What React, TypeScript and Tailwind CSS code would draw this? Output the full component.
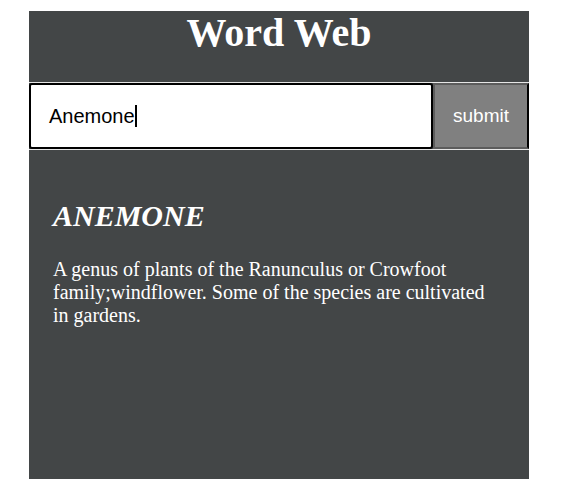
import React from 'react';

const App: React.FC = () => {
  const word = 'Anemone';
  const definition =
    'A genus of plants of the Ranunculus or Crowfoot family;windflower. Some of the species are cultivated in gardens.';

  return (
    <div className="min-h-[479px] bg-white">
      <div className="ml-[29px] pt-[11px] w-[500px]">
        <div className="h-[468px] bg-[#434647] flex flex-col">
          {/* Header */}
          <h1 className="text-center text-white font-bold text-[40px] leading-[44px] font-['Liberation_Serif',serif]">
            Word Web
          </h1>

          {/* Search form */}
          <form
            className="mt-[27px] flex border-y border-[#e6e6e6] h-[68px]"
            onSubmit={(e) => e.preventDefault()}
          >
            <div className="flex-1 flex items-center bg-white border-2 border-black rounded-[3px] pl-[18px] text-[20px] text-black font-['Liberation_Sans',sans-serif]">
              <span>{word}</span>
              <span className="inline-block w-[2px] h-[22px] bg-black"></span>
            </div>
            <button
              type="submit"
              className="w-[96px] bg-[#808080] text-white text-[19px] border-2 border-[#5c5c5c] border-r-black font-['Liberation_Sans',sans-serif]"
            >
              submit
            </button>
          </form>

          {/* Result */}
          <div className="pl-[24px] pt-[49px] font-['Liberation_Serif',serif] text-white">
            <h2 className="text-[30px] leading-[34px] font-bold italic uppercase">{word}</h2>
            <p className="mt-[25px] w-[440px] text-[20px] leading-[23px]">{definition}</p>
          </div>
        </div>
      </div>
    </div>
  );
};

export default App;
